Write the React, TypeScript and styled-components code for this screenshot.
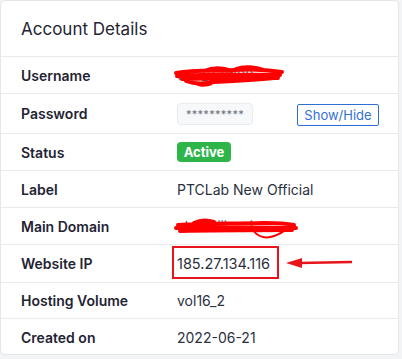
import React from "react";
import styled, { createGlobalStyle } from "styled-components";

const Global = createGlobalStyle`
  html, body { margin: 0; padding: 0; background: #f3f4f6; }
  body { font-family: Inter, "Noto Sans", sans-serif; color: #1f2433; }
`;

const Page = styled.div`
  width: 402px;
  height: 359px;
  padding: 0 3px 4px 0;
  box-sizing: border-box;
`;

const Card = styled.div`
  background: #fff;
  border: 1px solid #e4e6ea;
  border-radius: 5px;
  box-sizing: border-box;
  height: 355px;
  overflow: hidden;
`;

const Header = styled.div`
  height: 55px;
  display: flex;
  align-items: center;
  padding-left: 20px;
  font-size: 17px;
  font-weight: 400;
  color: #1f2433;
`;

const Row = styled.div<{ $h?: number }>`
  position: relative;
  display: grid;
  grid-template-columns: 156px 1fr;
  align-items: center;
  height: ${(p) => p.$h ?? 37}px;
  padding: 0 19px 0 20px;
  border-top: 1px solid #e8eaed;
  box-sizing: border-box;
  font-size: 14px;
`;

const Label = styled.div`
  font-weight: 600;
  color: #1f2433;
`;

const Value = styled.div`
  position: relative;
  display: flex;
  align-items: center;
  justify-content: space-between;
  color: #2a3040;
`;

const PassBox = styled.div`
  width: 76px;
  height: 22px;
  box-sizing: border-box;
  background: #f6f8f9;
  border: 1px solid #e9ecee;
  border-radius: 4px;
  display: flex;
  align-items: center;
  justify-content: center;
  font-size: 11px;
  color: #6b7280;
  letter-spacing: 0.3px;
`;

const ShowButton = styled.button`
  width: 82px;
  height: 22px;
  box-sizing: border-box;
  background: #fff;
  border: 1px solid #2f6ed3;
  border-radius: 2px;
  color: #3470d4;
  font-family: Inter, "Noto Sans", sans-serif;
  font-size: 13px;
  padding: 0;
  margin-top: 2px;
`;

const Badge = styled.span`
  display: inline-flex;
  align-items: center;
  justify-content: center;
  width: 54px;
  height: 20px;
  background: #2eb54a;
  border-radius: 4px;
  color: #fff;
  font-weight: 700;
  font-size: 13px;
`;

const IpWrap = styled.span`
  position: relative;
  font-size: 14.5px;
`;

const RedBox = styled.div`
  position: absolute;
  left: -5px;
  top: -9px;
  width: 107px;
  height: 33px;
  border: 2px solid #e8141b;
  box-sizing: border-box;
`;

const Scribble = styled.svg<{ $top: number }>`
  position: absolute;
  left: -3px;
  top: ${(p) => p.$top}px;
  overflow: visible;
`;

const Arrow = styled.svg`
  position: absolute;
  left: 108px;
  top: 2px;
  overflow: visible;
`;

const Redacted = styled.span`
  position: relative;
  color: #555;
  font-size: 13px;
`;

export default function App() {
  return (
    <>
      <Global />
      <Page>
        <Card>
          <Header>Account Details</Header>
          <Row>
            <Label>Username</Label>
            <Value>
              <Redacted>
                c_l2_3_0000
                <Scribble $top={-2} width="112" height="24" viewBox="0 0 112 24">
                  <path
                    d="M2 8 C20 5 40 6 60 5 C75 4 90 4 108 7 M3 11 C30 9 60 9 106 10 M8 14 C40 13 70 12 104 13 M30 6 C40 2 50 3 58 6 M62 4 C70 1 82 2 90 5 M12 16 C20 19 30 19 40 17 C60 16 80 15 100 13"
                    stroke="#ff0000"
                    strokeWidth="4"
                    fill="none"
                    strokeLinecap="round"
                  />
                  <path
                    d="M18 16 C22 21 30 22 38 19"
                    stroke="#ff0000"
                    strokeWidth="2"
                    fill="none"
                  />
                </Scribble>
              </Redacted>
            </Value>
          </Row>
          <Row $h={40}>
            <Label>Password</Label>
            <Value>
              <PassBox>**********</PassBox>
              <ShowButton>Show/Hide</ShowButton>
            </Value>
          </Row>
          <Row>
            <Label>Status</Label>
            <Value>
              <Badge>Active</Badge>
            </Value>
          </Row>
          <Row>
            <Label>Label</Label>
            <Value>PTCLab New Official</Value>
          </Row>
          <Row>
            <Label>Main Domain</Label>
            <Value>
              <Redacted>
                ok_ _ _iii _ _ i _ _
                <Scribble $top={1} width="124" height="24" viewBox="0 0 124 24">
                  <path
                    d="M4 6 C30 4 60 5 90 4 C105 4 115 5 120 6 M2 9 C40 8 80 9 122 9 M6 12 C40 11 80 11 118 11 M20 4 C26 1 34 1 40 3"
                    stroke="#ff0000"
                    strokeWidth="4"
                    fill="none"
                    strokeLinecap="round"
                  />
                  <path
                    d="M80 12 C84 18 92 20 100 17 C106 15 110 12 112 10"
                    stroke="#ff0000"
                    strokeWidth="2"
                    fill="none"
                  />
                </Scribble>
              </Redacted>
            </Value>
          </Row>
          <Row $h={38}>
            <Label>Website IP</Label>
            <Value>
              <IpWrap>
                185.27.134.116
                <RedBox />
                <Arrow width="70" height="12" viewBox="0 0 70 12">
                  <path d="M14 6 L67 5" stroke="#e8141b" strokeWidth="2.5" />
                  <path d="M1 6 L17 1 L17 11 Z" fill="#e8141b" />
                </Arrow>
              </IpWrap>
            </Value>
          </Row>
          <Row $h={36}>
            <Label>Hosting Volume</Label>
            <Value>vol16_2</Value>
          </Row>
          <Row>
            <Label>Created on</Label>
            <Value>2022-06-21</Value>
          </Row>
        </Card>
      </Page>
    </>
  );
}
